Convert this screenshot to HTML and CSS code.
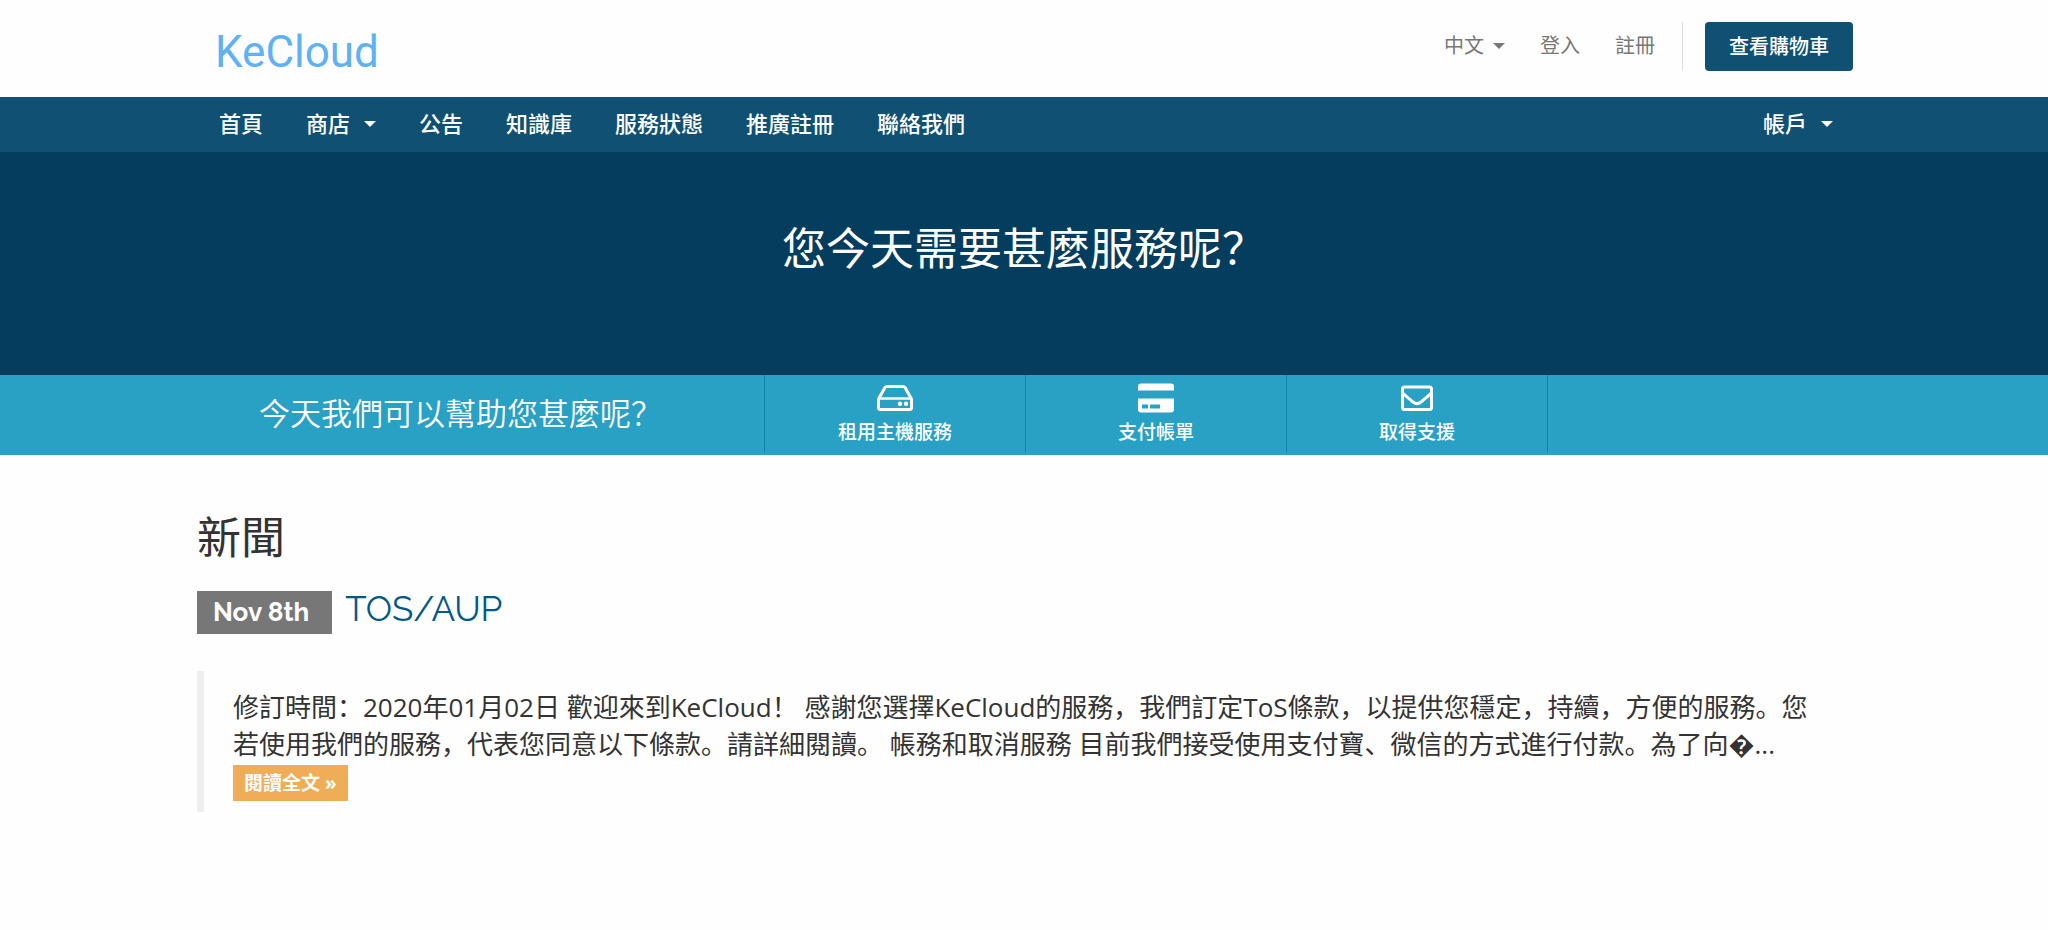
FILE: index.html
```html
<!DOCTYPE html>
<html lang="zh-Hans">
<head>
<meta charset="utf-8">
<meta name="viewport" content="width=device-width, initial-scale=1">
<title>KeCloud</title>
<link rel="stylesheet" href="styles.css">
</head>
<body>
<header class="header">
  <div class="container header-row">
    <a class="logo" href="#">KeCloud</a>
    <div class="top-nav">
      <button class="top-link" type="button">中文<span class="caret"></span></button>
      <a class="top-link" href="#">登入</a>
      <a class="top-link" href="#">註冊</a>
      <div class="cart-slot"><a class="cart-button" href="#">查看購物車</a></div>
    </div>
  </div>
</header>
<nav class="main-menu">
  <div class="container menu-row">
    <ul class="menu-list">
      <li><a class="menu-link" href="#">首頁</a></li>
      <li><button class="menu-link" type="button">商店<span class="caret"></span></button></li>
      <li><a class="menu-link" href="#">公告</a></li>
      <li><a class="menu-link" href="#">知識庫</a></li>
      <li><a class="menu-link" href="#">服務狀態</a></li>
      <li><a class="menu-link" href="#">推廣註冊</a></li>
      <li><a class="menu-link" href="#">聯絡我們</a></li>
    </ul>
    <button class="menu-link" type="button">帳戶<span class="caret"></span></button>
  </div>
</nav>
<section class="banner">
  <h1 class="banner-title">您今天需要甚麼服務呢？</h1>
</section>
<section class="shortcuts">
  <div class="container shortcuts-row">
    <p class="shortcuts-lead">今天我們可以幫助您甚麼呢？</p>
    <a class="shortcut" href="#">
      <svg class="shortcut-icon" viewBox="0 0 38 32" fill="none" stroke="currentColor" stroke-width="3" stroke-linejoin="round" aria-hidden="true"><path d="M2.500 17 L9 5.500 Q9.700 4.500 11 4.500 H27 Q28.300 4.500 29 5.500 L35.500 17 V25.500 Q35.500 27.500 33.500 27.500 H4.500 Q2.500 27.500 2.500 25.500 Z"/><path d="M2.500 16.500 H35.500" stroke-width="2.500"/><circle cx="24" cy="21.800" r="2.200" fill="currentColor" stroke="none"/><circle cx="30" cy="21.800" r="2.200" fill="currentColor" stroke="none"/></svg>
      <span>租用主機服務</span>
    </a>
    <a class="shortcut" href="#">
      <svg class="shortcut-icon" viewBox="0 0 38 32" fill="currentColor" aria-hidden="true"><path d="M4 1.500 H34 Q37 1.500 37 4.500 V8.500 H1 V4.500 Q1 1.500 4 1.500Z"/><path fill-rule="evenodd" d="M1 16.500 H37 V27.500 Q37 30.500 34 30.500 H4 Q1 30.500 1 27.500Z M5 22.500 V26.500 H11 V22.500Z M13 22.500 V26.500 H23 V22.500Z"/></svg>
      <span>支付帳單</span>
    </a>
    <a class="shortcut" href="#">
      <svg class="shortcut-icon" viewBox="0 0 38 32" fill="none" stroke="currentColor" stroke-width="3" stroke-linejoin="round" aria-hidden="true"><rect x="4.500" y="5" width="29" height="22.500" rx="2"/><path d="M4.500 11 C8 14 12 17.500 15 20 C18 22.400 20 22.400 23 20 C26 17.500 30 14 33.500 11"/></svg>
      <span>取得支援</span>
    </a>
  </div>
</section>
<main class="container news">
  <h2 class="news-title">新聞</h2>
  <div class="news-head">
    <span class="news-date">Nov 8th</span>
    <a class="news-link" href="#">TOS/AUP</a>
  </div>
  <blockquote class="news-body">
    <p class="news-text">修訂時間：2020年01月02日 歡迎來到KeCloud！ 感謝您選擇KeCloud的服務，我們訂定ToS條款，以提供您穩定，持續，方便的服務。您若使用我們的服務，代表您同意以下條款。請詳細閱讀。 帳務和取消服務 目前我們接受使用支付寶、微信的方式進行付款。為了向&#xFFFD;...</p>
    <a class="read-more" href="#">閱讀全文 »</a>
  </blockquote>
</main>
</body>
</html>
```
FILE: styles.css
```css
* {
  box-sizing: border-box;
}

body {
  margin: 0;
  background: #fefefe;
  color: #333;
  font-family: "Open Sans", "Noto Sans CJK SC", sans-serif;
  font-size: 20px;
}

a {
  color: inherit;
  text-decoration: none;
}

button {
  padding: 0;
  border: 0;
  background: none;
  color: inherit;
  font: inherit;
  cursor: pointer;
}

h1,
h2,
p,
ul,
blockquote {
  margin: 0;
  padding: 0;
  font-weight: 400;
}

.container {
  width: 100%;
  max-width: 1658px;
  margin: 0 auto;
}

.caret {
  border: 6px solid transparent;
  border-top-color: currentColor;
  border-bottom: 0;
}

.header-row {
  display: flex;
  align-items: flex-start;
  justify-content: space-between;
  padding: 22px 0 26px 20px;
}

.logo {
  color: #5eb1f3;
  font-family: Roboto, sans-serif;
  font-size: 44px;
  line-height: 49px;
  padding-top: 6px;
  margin-bottom: -6px;
}

.top-nav {
  display: flex;
  align-items: flex-start;
  gap: 35px;
  color: #777;
  line-height: 47px;
}

.top-link {
  display: flex;
  align-items: center;
  gap: 9px;
  line-height: 47px;
}

.cart-slot {
  margin-left: -8px;
  padding-left: 22px;
  border-left: 1px solid #ddd;
}

.cart-button {
  display: block;
  padding: 0 24px;
  border-radius: 4px;
  background: #105173;
  color: #fff;
  font-weight: 500;
  line-height: 49px;
}

.main-menu {
  padding-bottom: 2px;
  background: #105173;
  color: #fff;
  font-size: 22px;
}

.menu-row,
.menu-list {
  display: flex;
}

.menu-row {
  justify-content: space-between;
  padding: 0 20px 0 24px;
}

.menu-list {
  gap: 43px;
  list-style: none;
}

.menu-link {
  display: flex;
  align-items: center;
  gap: 14px;
  font-weight: 500;
  line-height: 53px;
}

.banner {
  padding: 64px 20px 95px;
  background: #053d5e;
  color: #fff;
  text-align: center;
}

.banner-title {
  font-size: 44px;
  line-height: 64px;
}

.shortcuts {
  padding-bottom: 3px;
  background: #28a1c5;
  color: #fff;
}

.shortcuts-row {
  display: flex;
}

.shortcuts-lead {
  width: 569px;
  padding-left: 64px;
  font-size: 31px;
  font-weight: 350;
  line-height: 77px;
}

.shortcut {
  display: flex;
  flex-direction: column;
  align-items: center;
  width: 261px;
  padding-top: 7px;
  border-left: 1px solid #0f86ab;
  font-size: 19px;
  font-weight: 500;
  line-height: 37px;
}

.shortcut:last-child {
  width: 262px;
  border-right: 1px solid #0f86ab;
}

.shortcut-icon {
  width: 38px;
  height: 32px;
}

.news {
  padding: 50px 0 60px 2px;
}

.news-title {
  font-size: 44px;
  line-height: 64px;
}

.news-head {
  display: flex;
  align-items: flex-start;
  gap: 13px;
  margin-top: 22px;
  font-family: Raleway, Lato, sans-serif;
}

.news-date {
  padding: 0 23px 0 16px;
  background: #777;
  color: #fff;
  font-size: 26px;
  font-weight: 700;
  line-height: 43px;
}

.news-link {
  color: #005988;
  font-size: 35px;
  line-height: 36px;
}

.news-body {
  margin-top: 37px;
  padding: 18px 29px 11px;
  border-left: 7px solid #eee;
}

.news-text {
  font-size: 26px;
  line-height: 37px;
}

.read-more {
  display: inline-block;
  margin-top: 2px;
  padding: 0 11px;
  background: #f0ad57;
  color: #fff;
  font-size: 19px;
  font-weight: 700;
  line-height: 36px;
  vertical-align: top;
}
```
